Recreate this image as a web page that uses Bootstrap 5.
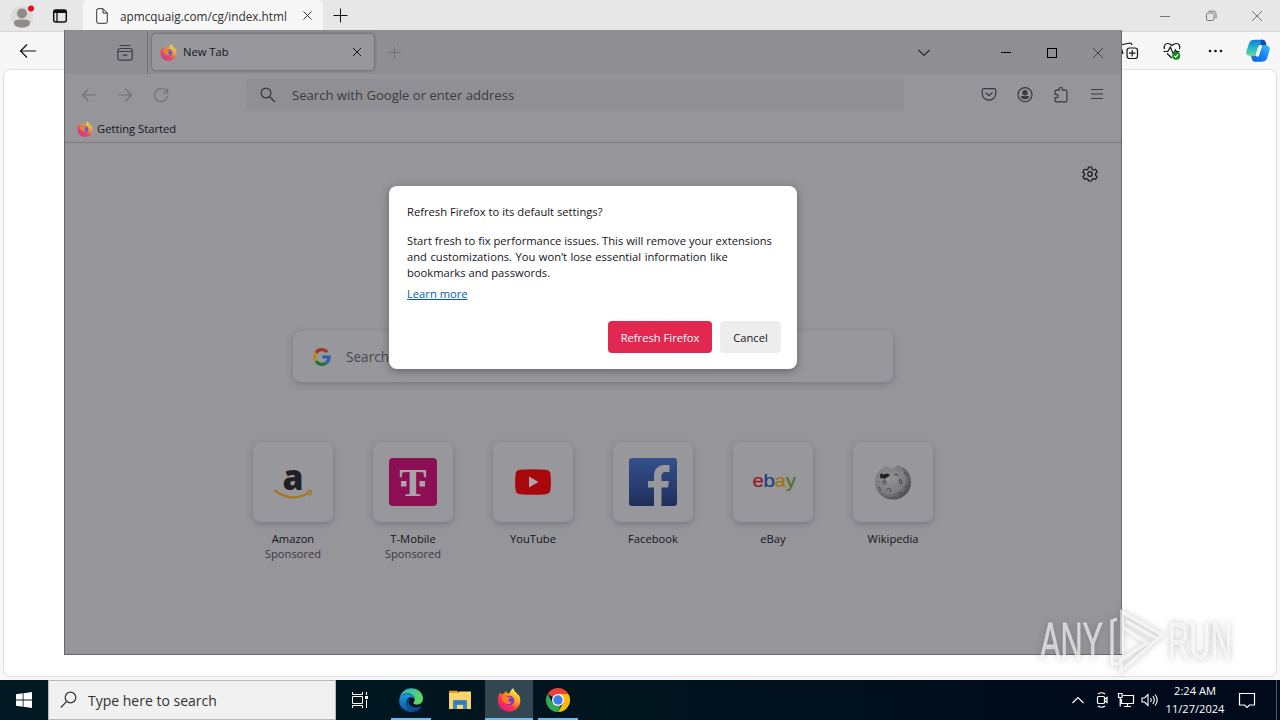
<!DOCTYPE html>
<html lang="en">
<head>
    <meta charset="UTF-8">
    <meta name="viewport" content="width=device-width, initial-scale=1.0">
    <title>Refresh Firefox</title>
    <link href="https://cdn.jsdelivr.net/npm/bootstrap@5.3.0/dist/css/bootstrap.min.css" rel="stylesheet">
    <style>
        body {
            width: 1280px;
            height: 720px;
            font-family: "Open Sans", "Noto Sans", sans-serif;
            font-size: 11.2px;
            line-height: 16px;
            color: #15141a;
        }
        svg { display: block; flex-shrink: 0; }
        .line-icon { fill: none; stroke: currentColor; stroke-width: 1.2; }

        /* Edge */
        .edge { height: 680px; background: #f7f7f8; color: #111; }
        .edge-tabs { height: 32px; background: #e7e7e7; border-bottom: 1px solid #d6d6d6; padding-left: 10px; }
        .edge-tab { width: 240px; height: 31px; background: #f7f7f7; border-radius: 5px 5px 0 0; margin-left: 15px; padding: 0 10px 0 13px; font-size: 11.8px; color: #303030; }
        .edge-tab span { margin-left: 12px; width: 183px; }
        .edge-win { color: #777; width: 46px; }
        .edge-tools { height: 37px; padding-right: 1px; }
        .edge-cell { width: 43px; }
        .edge-page { margin: 0 3px 3px 3px; border: 1px solid #dfdfe1; border-radius: 8px; }

        /* Firefox window */
        .fx { left: 64px; top: 30px; width: 1058px; height: 625px; background: #96959a; border: 1px solid #69686d; border-top-color: #8b8a8f; }
        .fx-tabs { height: 43px; background: #8f8e93; color: #28272d; }
        .fx-library { margin: 0 10px 0 48px; color: #3f3e44; }
        .fx-divider { width: 1px; height: 43px; background: #6f6e73; }
        .fx-tab { width: 222px; height: 36px; margin: 0 0 1px 4px; padding: 0 11px 0 8px; background: #98979c; border-radius: 4px; box-shadow: 0 0 3px rgba(0, 0, 0, .45); color: #15141a; }
        .fx-tab span { margin-left: 6px; }
        .fx-plus { margin-left: 14px; }
        .fx-chevron { margin-left: 516px; }
        .fx-win { width: 46px; }
        .fx-nav { height: 42px; padding: 0 6px; color: #3b3a40; }
        .fx-cell { width: 36px; }
        .fx-dim { color: #727176; }
        .fx-url { width: 658px; height: 32px; margin-left: 67px; padding-left: 14px; background: #909094; border-radius: 4px; font-size: 13.1px; color: #3b3a40; }
        .fx-url span { margin-left: 16px; }
        .fx-marks { height: 27px; padding: 0 0 1px 12px; border-bottom: 1px solid #7b7a7f; }
        .fx-search { width: 600px; height: 51px; background: #98979c; border-radius: 8px; box-shadow: 0 2px 6px rgba(58, 57, 68, .3); font-size: 13.6px; color: #48474d; padding-left: 20px; }
        .fx-search span { margin-left: 15px; }
        .fx-gear { height: 188px; padding: 23px 23px 0 0; }
        .fx-tiles { gap: 40px; margin-top: 60px; }
        .fx-tile { width: 80px; line-height: 15px; }
        .fx-tile-box { height: 80px; background: #98979c; border-radius: 8px; box-shadow: 0 2px 6px rgba(58, 57, 68, .3); margin-bottom: 9px; }
        .fx-sponsored { color: #3c3b40; }

        /* Refresh dialog */
        .fx-dialog { left: 324px; top: 155px; width: 408px; height: 183px; padding: 18px 16px 16px 18px; background: #fff; border-radius: 8px; box-shadow: 0 2px 8px rgba(0, 0, 0, .35); }
        .fx-dialog p { margin: 13px 0 5px; }
        .fx-line { word-spacing: .6px; }
        .fx-dialog a { color: #0060b9; }
        .fx-btn { --bs-btn-font-size: 11.2px; --bs-btn-border-radius: 4px; --bs-btn-padding-x: 0; --bs-btn-padding-y: 0; height: 32px; padding-top: 2px; border: 0; }
        .fx-btn-danger { width: 104px; background: #e22850; color: #fff; }
        .fx-btn-plain { width: 61px; background: #ededee; color: #15141a; }

        .watermark { left: 1020px; top: 590px; filter: drop-shadow(0 0 3px rgba(70, 70, 70, .5)); }

        /* Taskbar */
        .taskbar { height: 40px; background: linear-gradient(90deg, #001922, #00141e 50%, #000a1b 85%); color: #fff; }
        .tb-cell { width: 48px; height: 40px; }
        .tb-search { width: 288px; height: 40px; background: #f1f1f1; border: 1px solid #b9b9b9; font-size: 14px; color: #303030; padding-left: 11px; }
        .tb-search span { margin: 2px 0 0 11px; }
        .tb-apps { gap: 1px; margin-left: 3px; }
        .tb-open { border-bottom: 2px solid #76b9ed; width: 40px; margin: 0 4px; padding-top: 2px; }
        .tb-active { border-bottom: 2px solid #76b9ed; padding-top: 2px; background: #334751; }
        .tb-tray { width: 24px; }
        .tb-clock { width: 66px; line-height: 18px; font-size: 11.1px; }
        .tb-notify { width: 38px; margin-right: 10px; }
        .tb-peek { width: 4px; border-left: 1px solid #4c5667; }
    </style>
    <script src="https://cdn.jsdelivr.net/npm/bootstrap@5.3.0/dist/js/bootstrap.bundle.min.js"></script>
</head>
<body class="position-relative overflow-hidden">

    <svg width="0" height="0" class="position-absolute">
        <defs>
            <linearGradient id="fxBody" x1=".85" y1=".1" x2=".2" y2=".95">
                <stop offset="0" stop-color="#fff44f"/>
                <stop offset=".35" stop-color="#ff980e"/>
                <stop offset=".65" stop-color="#ff3647"/>
                <stop offset="1" stop-color="#e31587"/>
            </linearGradient>
            <linearGradient id="fxTail" x1=".6" y1="0" x2=".3" y2="1">
                <stop offset="0" stop-color="#fff04a"/>
                <stop offset=".5" stop-color="#ffb52a"/>
                <stop offset="1" stop-color="#ff5a35"/>
            </linearGradient>
            <linearGradient id="edgeA" x1="0" y1="0" x2="1" y2=".4">
                <stop offset="0" stop-color="#2aa7e8"/>
                <stop offset="1" stop-color="#5fd85a"/>
            </linearGradient>
            <linearGradient id="edgeB" x1="0" y1="0" x2="0" y2="1">
                <stop offset="0" stop-color="#1b9de2"/>
                <stop offset="1" stop-color="#0c50a0"/>
            </linearGradient>
            <linearGradient id="copA" x1="0" y1="0" x2="0" y2="1">
                <stop offset="0" stop-color="#147bd8"/>
                <stop offset=".55" stop-color="#23bdcc"/>
                <stop offset="1" stop-color="#74d68a"/>
            </linearGradient>
            <linearGradient id="copB" x1="1" y1="0" x2="0" y2="1">
                <stop offset="0" stop-color="#36c2f5"/>
                <stop offset=".5" stop-color="#1684f0"/>
                <stop offset="1" stop-color="#1262d6"/>
            </linearGradient>
            <linearGradient id="fbBlue" x1="0" y1="0" x2="0" y2="1">
                <stop offset="0" stop-color="#34508c"/>
                <stop offset="1" stop-color="#202f5c"/>
            </linearGradient>
            <radialGradient id="globe" cx=".4" cy=".4" r=".65">
                <stop offset="0" stop-color="#969696"/>
                <stop offset=".65" stop-color="#7d7d7f"/>
                <stop offset="1" stop-color="#46464a"/>
            </radialGradient>
            <symbol id="firefox" viewBox="0 0 24 24">
                <path d="M3.200 4.200c.2 1 .6 1.600 1.200 2.100C5.100 5.800 6 5.500 7 5.500 7.400 4.300 8.300 3.300 9.300 2.900 9.200 3.900 9.500 4.800 10.200 5.300L13 5.100C13.600 3.200 14.800 1.300 16.300.3c.2 2 1.300 3 2.700 4.400.9.900 1.600 1.900 2 2.900L21.400 6.500C23.300 9.700 23.700 12.700 22.900 15.600 21.500 20.500 17.300 23.700 12.200 23.700 5.900 23.700.9 18.800.8 12.600.8 9.500 1.500 6.600 3.200 4.200z" fill="url(#fxBody)"/>
                <circle cx="12.300" cy="12.600" r="4.900" fill="#7b3bd0"/>
                <path d="M4.500 9c2-1.600 4.600-1.400 6.200-.3 1.300.1 2.700.2 3 .8-.2 1-1.700 1.300-2.700 2 .3 1.700 1.800 2.700 3.700 2.500-.8 2-4.400 3.300-6.900.8C5.700 13.300 4.500 11.500 4.500 9z" fill="#ff7a24"/>
                <path d="M16.300.3C13.500 2 12.500 4.800 13 6.300c3 1 4.500 3.200 4.600 5.500.3 3.200-1.500 5.800-4.500 6.600 4 .6 8.700-1.400 9.700-5.600.2-2.300-.3-4.400-1.400-6.300L21 7.600C20 4.600 16.800 3.600 16.300.3z" fill="url(#fxTail)"/>
            </symbol>
        </defs>
    </svg>

    <!-- Edge browser in the background -->
    <div class="edge d-flex flex-column">
        <div class="edge-tabs d-flex align-items-center">
            <svg width="26" height="28" viewBox="0 0 26 28">
                <circle cx="12" cy="15" r="11" fill="#dcdad8"/>
                <circle cx="12" cy="11.500" r="5" fill="#8f8c89"/>
                <path d="M4 21c0-3 3-3.500 8-3.500s8 .5 8 3.500-4 4.500-8 4.500-8-1.500-8-4.500z" fill="#8f8c89"/>
                <circle cx="21" cy="6.500" r="3" fill="#e3101c"/>
            </svg>
            <svg class="line-icon ms-3" width="16" height="16" viewBox="0 0 16 16">
                <rect x="1.700" y="2" width="12.600" height="12" rx="2" stroke-width="1.500"/>
                <path d="M2 3.500h12" stroke-width="3"/>
                <path d="M5 4v10" stroke-width="1.300"/>
            </svg>
            <div class="edge-tab d-flex align-items-center">
                <svg class="line-icon" width="12" height="16" viewBox="0 0 12 16"><path d="M.7 2.200Q.7.700 2.200.700H7l4.300 4.300v8.800q0 1.500-1.500 1.500H2.200Q.7 15.300.7 13.800zM7 .7V5h4.300" stroke-width="1"/></svg>
                <span class="text-nowrap flex-shrink-0">apmcquaig.com/cg/index.html</span>
                <svg class="line-icon" width="9" height="9" viewBox="0 0 9 9"><path d="M.5.5l8 8M8.500.5l-8 8" stroke-width="1"/></svg>
            </div>
            <svg class="line-icon ms-2" width="18" height="16" viewBox="0 0 18 16"><path d="M2.500 7.500h14M9.500.5v14" stroke-width="1"/></svg>
            <div class="d-flex ms-auto">
                <div class="edge-win d-flex justify-content-center"><svg class="line-icon" width="12" height="12" viewBox="0 0 12 12"><path d="M1 6.500h10" stroke-width="1"/></svg></div>
                <div class="edge-win d-flex justify-content-center"><svg class="line-icon" width="12" height="12" viewBox="0 0 12 12"><rect x="1.500" y="3" width="7.500" height="7.500" rx="1.500" stroke-width="1"/><path d="M3.500 1.200H8.500Q11 1.200 11 3.700V8.500" stroke-width="1"/></svg></div>
                <div class="edge-win d-flex justify-content-center"><svg class="line-icon" width="12" height="12" viewBox="0 0 12 12"><path d="M1 1l10 10M11 1L1 11" stroke-width="1"/></svg></div>
            </div>
        </div>
        <div class="edge-tools d-flex align-items-center">
            <svg class="line-icon ms-3" width="24" height="16" viewBox="0 0 24 16"><path d="M20 8H4.500M11 1.500L4.500 8l6.500 6.500"/></svg>
            <div class="d-flex align-items-center ms-auto">
                <div class="edge-cell d-flex justify-content-center">
                    <svg class="line-icon" width="20" height="20" viewBox="0 0 20 20"><path d="M4 13L2 6q-.5-2 1.500-2.500L11 2q1.500 0 2 2"/><rect x="8" y="7" width="10.500" height="10.500" rx="2.500"/><path d="M10 12.200h6.500M13.200 9v6.500"/></svg>
                </div>
                <div class="edge-cell d-flex justify-content-center">
                    <svg class="line-icon" width="20" height="20" viewBox="0 0 20 20"><path d="M2.500 8C1.500 4 3.500 2.500 5.500 2.500 8 2.500 9 3.500 10 4.500c1-1 2-2 4.500-2C17 2.500 18.500 5 17.500 8M1.500 10.500h4.300L8.300 6l3 7L13.500 9l1 1.500h3M5 12.500l5 4.500"/><circle cx="14.200" cy="14.700" r="4" fill="#13871a" stroke="none"/><path d="M12.300 14.800l1.400 1.300 2.500-2.700" stroke="#fff"/></svg>
                </div>
                <div class="edge-cell d-flex justify-content-center">
                    <svg width="16" height="6" viewBox="0 0 16 6" fill="currentColor"><circle cx="3" cy="3" r="1.300"/><circle cx="8.500" cy="3" r="1.300"/><circle cx="14" cy="3" r="1.300"/></svg>
                </div>
                <div class="edge-cell d-flex justify-content-center">
                    <svg width="24" height="24" viewBox="0 0 24 24">
                        <path d="M9 .8h7.500c1.600 0 2.300 1.200 2.800 2.500l1.100 3.200H14.500c-1.600 0-2.300 1-2.700 2.300L9.500 16.700H3.500C.7 16.700-.3 14.500.4 12L3 4.500C4 1.800 5.800.8 9 .8z" fill="url(#copA)"/>
                        <path d="M14.800.8h2c1.600 0 2.300 1.200 2.800 2.500l1 3.200H14.500z" fill="#164bb2"/>
                        <path d="M15.500 6.500h4.800c2.900 0 4 2 3.300 4.800L21.200 19c-.9 2.600-2.600 3.700-5.500 3.700H9c-1.600 0-2.500-.8-3-2.500l-1-3.500h4.200c1.600 0 2.600-.9 3-2.200z" fill="url(#copB)"/>
                        <path d="M14.500 7.500l-3 8.700" stroke="#fff" stroke-width="3" stroke-linecap="round"/>
                    </svg>
                </div>
            </div>
        </div>
        <div class="edge-page flex-fill bg-white"></div>
    </div>

    <!-- Firefox window, dimmed behind its dialog -->
    <div class="fx position-absolute">
        <div class="fx-tabs d-flex align-items-center">
            <svg class="line-icon fx-library" width="24" height="20" viewBox="0 0 24 20"><path d="M6.500 2.500h11M4.800 8q0-2.500 2.500-2.500h9.400q2.500 0 2.500 2.500v6.700q0 2.500-2.500 2.500H7.300q-2.500 0-2.500-2.500zM4.800 8.500h14.400M9.800 12.200h4.500" stroke-width="1.200"/></svg>
            <div class="fx-divider"></div>
            <div class="fx-tab d-flex align-items-center">
                <svg width="17" height="17" opacity=".75"><use href="#firefox"/></svg>
                <span>New Tab</span>
                <svg class="line-icon ms-auto" width="12" height="12" viewBox="0 0 12 12"><path d="M2 2l8 8M10 2l-8 8" stroke-width="1"/></svg>
            </div>
            <svg class="line-icon fx-dim fx-plus" width="13" height="13" viewBox="0 0 13 13"><path d="M.5 6.500h12M6.500.5v12" stroke-width="1"/></svg>
            <svg class="line-icon fx-chevron" width="14" height="12" viewBox="0 0 14 12"><path d="M1.500 3L7 8.500 12.500 3" stroke-width="1.100"/></svg>
            <div class="d-flex text-black ms-auto">
                <div class="fx-win d-flex justify-content-center"><svg class="line-icon" width="12" height="12" viewBox="0 0 12 12"><path d="M1 5.500h10" stroke-width="1"/></svg></div>
                <div class="fx-win d-flex justify-content-center"><svg class="line-icon" width="12" height="12" viewBox="0 0 12 12"><rect x="1.500" y="1.500" width="9" height="9" stroke-width="1"/></svg></div>
                <div class="fx-win d-flex justify-content-center"><svg class="line-icon" width="12" height="12" viewBox="0 0 12 12"><path d="M1 1l10 10M11 1L1 11" stroke="#403f44" stroke-width="1"/></svg></div>
            </div>
        </div>

        <div class="fx-nav d-flex align-items-center">
            <div class="fx-cell fx-dim d-flex justify-content-center"><svg class="line-icon" width="16" height="16" viewBox="0 0 16 16"><path d="M15 8H1.500M7.500 2l-6 6 6 6"/></svg></div>
            <div class="fx-cell fx-dim d-flex justify-content-center"><svg class="line-icon" width="16" height="16" viewBox="0 0 16 16"><path d="M1 8h13.500M8.500 2l6 6-6 6"/></svg></div>
            <div class="fx-cell fx-dim d-flex justify-content-center"><svg class="line-icon" width="16" height="16" viewBox="0 0 16 16"><path d="M13.800 4.800A6.600 6.600 0 1 0 14.600 9M14.500 1.500v4.500H10"/></svg></div>
            <div class="fx-url d-flex align-items-center">
                <svg class="line-icon" width="16" height="16" viewBox="0 0 16 16"><circle cx="6" cy="6" r="4.800" stroke-width="1.400"/><path d="M9.500 9.500L15 15" stroke-width="1.500"/></svg>
                <span>Search with Google or enter address</span>
            </div>
            <div class="d-flex ms-auto">
                <div class="fx-cell d-flex justify-content-center"><svg class="line-icon" width="16" height="16" viewBox="0 0 16 16"><path d="M3 1.700h10q1.800 0 1.800 1.800V6.800a6.800 6.300 0 0 1-13.600 0V3.500Q1.200 1.700 3 1.700zM4.500 5.500L8 8.800 11.500 5.500"/></svg></div>
                <div class="fx-cell d-flex justify-content-center"><svg class="line-icon" width="16" height="16" viewBox="0 0 16 16"><circle cx="8" cy="7.700" r="7"/><circle cx="8" cy="5.700" r="2.700" fill="currentColor" stroke="none"/><path d="M3.800 9h8.400c0 2-1.700 3.300-4.200 3.300S3.800 11 3.800 9z" fill="currentColor" stroke="none"/></svg></div>
                <div class="fx-cell d-flex justify-content-center"><svg class="line-icon" width="16" height="16" viewBox="0 0 16 16"><path d="M2 4.500q0-1.300 1.300-1.300H6.200V2.200q0-1.700 1.600-1.700t1.600 1.700v1h3.300Q14 3.200 14 4.500v9q0 1.300-1.300 1.300H3.300Q2 14.800 2 13.500v-2.800h1.200q1.900 0 1.900-1.700T3.200 7.300H2z"/></svg></div>
                <div class="fx-cell d-flex justify-content-center"><svg class="line-icon" width="16" height="16" viewBox="0 0 16 16"><path d="M2 2.500h12M2 7h12M2 11.500h12"/></svg></div>
            </div>
        </div>

        <div class="fx-marks d-flex align-items-center">
            <svg width="16" height="16" opacity=".75"><use href="#firefox"/></svg>
            <span class="ms-1">Getting Started</span>
        </div>

        <div class="fx-gear d-flex justify-content-end">
            <svg class="line-icon" width="16" height="16" viewBox="0 0 16 16"><circle cx="8" cy="8" r="2.300"/><path d="M6.500 1h3l.5 2.200 1.500.8 2.100-.7 1.600 2.700-1.600 1.500v1.800l1.500 1.300-1.500 2.700-2.100-.7-1.500.9L9.500 15h-3L6 13.500l-1.500-.9-2.100.7L.9 10.600l1.500-1.300V7.500L.8 6l1.600-2.700 2.100.7L6 3.200z" stroke-linejoin="round"/></svg>
        </div>

        <div class="d-flex flex-column align-items-center">
            <div class="fx-search d-flex align-items-center">
                <svg width="18" height="18" viewBox="0 0 18 18" fill="none" stroke-width="3.200">
                    <path d="M3 4.800A7.200 7.200 0 0 1 14.300 4" stroke="#a83428"/>
                    <path d="M3 4.800A7.400 7.400 0 0 0 3 13.200" stroke="#b68a10"/>
                    <path d="M3 13.200A7.200 7.200 0 0 0 13.600 14.700" stroke="#24713a"/>
                    <path d="M13.600 14.700Q16.200 12.500 16.200 9H9.300" stroke="#2f5fb0"/>
                </svg>
                <span>Search the web</span>
            </div>

            <div class="fx-tiles d-flex text-center">
                <div class="fx-tile">
                    <div class="fx-tile-box d-flex justify-content-center align-items-center">
                        <svg class="overflow-visible" width="48" height="48" viewBox="0 0 48 48">
                            <text x="24" y="32" text-anchor="middle" font-size="36" font-weight="800" fill="#211f25" textLength="21" lengthAdjust="spacingAndGlyphs">a</text>
                            <path d="M5.500 32.500Q23 45 40 34.800" fill="none" stroke="#a87521" stroke-width="2.200"/>
                            <path d="M37.500 33.500q5-2 5 0 0 2.500-2 5" fill="none" stroke="#a87521" stroke-width="1.400"/>
                        </svg>
                    </div>
                    <div>Amazon</div>
                    <div class="fx-sponsored">Sponsored</div>
                </div>
                <div class="fx-tile">
                    <div class="fx-tile-box d-flex justify-content-center align-items-center">
                        <svg width="48" height="48" viewBox="0 0 48 48">
                            <rect width="48" height="48" rx="4" fill="#8c0f53"/>
                            <text x="24" y="37.500" text-anchor="middle" font-family="Liberation Serif, serif" font-size="41" font-weight="700" fill="#a9a4ab">T</text>
                            <path d="M12 23h5.500v5.500H12zM30.500 23H36v5.500h-5.500z" fill="#a9a4ab"/>
                        </svg>
                    </div>
                    <div>T-Mobile</div>
                    <div class="fx-sponsored">Sponsored</div>
                </div>
                <div class="fx-tile">
                    <div class="fx-tile-box d-flex justify-content-center align-items-center">
                        <svg width="36" height="26" viewBox="0 0 36 26"><path d="M5 .8Q18-.4 31 .8 35 1.200 35.400 5 36.400 13 35.400 21 35 24.800 31 25.200 18 26.400 5 25.200 1 24.800.6 21-.4 13 .6 5 1 1.200 5 .8z" fill="#a8080c"/><path d="M14 7.500l9.500 5.500-9.500 5.500z" fill="#aaa6ab"/></svg>
                    </div>
                    <div>YouTube</div>
                </div>
                <div class="fx-tile">
                    <div class="fx-tile-box d-flex justify-content-center align-items-center">
                        <svg width="48" height="48" viewBox="0 0 48 48">
                            <rect width="48" height="48" rx="3" fill="url(#fbBlue)"/>
                            <path d="M25 48V29.500h-6V23h6v-5c0-7 4-11 10.500-11H40.500v7H37c-3.500 0-4.500 1.700-4.500 4.500V23h7.500l-1 6.500h-6.500V48z" fill="#98979c"/>
                        </svg>
                    </div>
                    <div>Facebook</div>
                </div>
                <div class="fx-tile">
                    <div class="fx-tile-box d-flex justify-content-center align-items-center">
                        <svg class="overflow-visible" width="48" height="48" viewBox="0 0 48 48">
                            <text x="3.500" y="29.500" font-family="Liberation Sans, sans-serif" font-size="19" letter-spacing="-.3" transform="translate(-.4 0) scale(1.080 1)" stroke-width=".2"><tspan fill="#921c2c" stroke="#921c2c">e</tspan><tspan fill="#183f83" stroke="#183f83">b</tspan><tspan fill="#a17513" stroke="#a17513">a</tspan><tspan fill="#4a7420" stroke="#4a7420">y</tspan></text>
                        </svg>
                    </div>
                    <div>eBay</div>
                </div>
                <div class="fx-tile">
                    <div class="fx-tile-box d-flex justify-content-center align-items-center">
                        <svg width="48" height="48" viewBox="0 0 48 48">
                            <path d="M12 11l6-3 4 3 7-3.500 7 3Q42 16 42 24.500A18 17 0 0 1 6 24.500Q6 16 12 11z" fill="url(#globe)"/>
                            <path d="M11 16.500q2-2 3 0l4-1 3 1-2 2.500-2 .5-1 2-2-1.500-2.500.5z" fill="#1f1f22"/>
                            <g fill="none" stroke="#3a3a3d" stroke-width=".8">
                                <path d="M14 23h3l-.5 3h-2zM30 22l1 4 2-.5-1-4zM17 32l3-2 2 2-1 2M25 17l3-1 1 2M9 29l2 1v3M35 14l3 4M36 30l3-3 1 1M28 36l3-2 2 1"/>
                                <path d="M22 9q-3 8 1 14t6 17M6.500 22q10 8 35 4" stroke="#747476" stroke-width=".5"/>
                            </g>
                        </svg>
                    </div>
                    <div>Wikipedia</div>
                </div>
            </div>
        </div>

        <div class="fx-dialog position-absolute d-flex flex-column text-nowrap">
            <div>Refresh Firefox to its default settings?</div>
            <p>Start fresh to fix performance issues. This will remove your extensions<br><span class="fx-line">and customizations. You won’t lose essential information like</span><br>bookmarks and passwords.</p>
            <div><a href="#">Learn more</a></div>
            <div class="d-flex justify-content-end gap-2 mt-auto">
                <button type="button" class="btn fx-btn fx-btn-danger">Refresh Firefox</button>
                <button type="button" class="btn fx-btn fx-btn-plain">Cancel</button>
            </div>
        </div>
    </div>

    <svg class="watermark position-absolute" width="245" height="90" viewBox="-10 -10 245 90">
        <g fill="#fff" fill-opacity=".62" stroke="#fff" stroke-opacity=".5" stroke-width=".8" font-family="Liberation Sans Narrow, Liberation Sans, sans-serif" font-size="52">
            <text x="10" y="59" textLength="63" lengthAdjust="spacingAndGlyphs">ANY</text>
            <text x="138" y="59" textLength="64" lengthAdjust="spacingAndGlyphs">RUN</text>
        </g>
        <g fill="none" stroke="#fff" stroke-opacity=".65" stroke-width="3.500">
            <path d="M87 19l-5 2v43h7"/>
            <path d="M92 54V12l40 23-41 36V60l26-17-25-16"/>
            <path d="M96 21l30 17"/>
        </g>
    </svg>

    <!-- Windows taskbar -->
    <div class="taskbar d-flex">
        <div class="tb-cell d-flex justify-content-center align-items-center">
            <svg width="16" height="16" viewBox="0 0 16 16" fill="#fff"><path d="M0 2.300L6.700 1.300v6.300H0zM7.500 1.200L16 0v7.600H7.500zM0 8.400h6.700v6.300L0 13.700zM7.500 8.400H16V16l-8.500-1.200z"/></svg>
        </div>
        <div class="tb-search d-flex align-items-center">
            <svg class="line-icon" width="17" height="18" viewBox="0 0 17 18"><circle cx="10.500" cy="6.500" r="5.300"/><path d="M6.800 10.300L.8 16.500"/></svg>
            <span>Type here to search</span>
        </div>
        <div class="tb-cell d-flex justify-content-center align-items-center">
            <svg class="line-icon" width="18" height="16" viewBox="0 0 18 16"><path d="M1.500 0v2.500h10V0M1.500 4.500h10v7h-10zM1.500 16v-2.500h10V16M15.500 0v3M15.500 8v8" stroke-width="1"/><path d="M14 4h3v3h-3z" fill="#fff" stroke="none"/></svg>
        </div>
        <div class="tb-apps d-flex">
            <div class="tb-cell tb-open d-flex justify-content-center align-items-center">
                <svg width="24" height="24" viewBox="0 0 24 24">
                    <path d="M.5 11C1.500 4.500 6.300.2 12.200.2 19 .2 24 5 24 10.500c0 4-3 6-6 6-2.600 0-3.800-.9-3.600-1.800.2-.7 1.300-1.300 1.300-3.200C15.700 8 12 5.500 8 5.500 4.500 5.500 1.500 8 .5 11z" fill="url(#edgeA)"/>
                    <path d="M.2 12.500C.7 8.500 4.200 6 8.300 6c4.300 0 7.400 2.800 7.400 5.500-.2-1-1.500-2.300-3.500-2.300-3 0-5 2.600-5 5.500 0 4.500 4 7.800 8.300 7.800 2.500 0 4.500-.7 6.500-2.100C20.300 22.500 16.500 24 12.300 24 5 24-.3 18.500.2 12.500z" fill="url(#edgeB)"/>
                    <path d="M10.400 10.500c-2 1.200-3.200 3.500-2.800 6 .6 3.900 4.400 6.300 8.400 6 2.500-.3 4.300-1.300 6-3 .8-.9.200-1.300-.7-.8-5 2-10.700-.3-11.500-4.500-.2-1.400 0-2.600.6-3.700z" fill="#124f92"/>
                </svg>
            </div>
            <div class="tb-cell d-flex justify-content-center align-items-center">
                <svg width="22" height="20" viewBox="0 0 22 20">
                    <path d="M0 1.500Q0 .8.800.8H8l2 2.200H0z" fill="#e49c1c"/>
                    <path d="M0 3h9l1-1.500h12V19H0z" fill="#fbd46c"/>
                    <path d="M4 19v-8q0-1 1-1h12q1 0 1 1v8h-4v-4H8v4z" fill="#3b89c4"/>
                    <path d="M6 12.500h10" stroke="#276da6" stroke-width="1.500"/>
                </svg>
            </div>
            <div class="tb-cell tb-active d-flex justify-content-center align-items-center">
                <svg width="24" height="24"><use href="#firefox"/></svg>
            </div>
            <div class="tb-cell tb-open d-flex justify-content-center align-items-center">
                <svg width="24" height="24" viewBox="0 0 24 24">
                    <path d="M12 12L1.600 6A12 12 0 0 1 22.400 6z" fill="#ea4335"/>
                    <path d="M12 6h10.400A12 12 0 0 1 12 24l5.200-9z" fill="#fbbc05"/>
                    <path d="M1.600 6l5.200 9 5.200 3 2.600-.5L12 24A12 12 0 0 1 1.600 6z" fill="#34a853"/>
                    <circle cx="12" cy="12" r="6" fill="#fff"/>
                    <circle cx="12" cy="12" r="4.700" fill="#3b7ded"/>
                </svg>
            </div>
        </div>
        <div class="d-flex align-items-center ms-auto">
            <div class="tb-tray d-flex justify-content-center"><svg class="line-icon" width="14" height="10" viewBox="0 0 14 10"><path d="M1.500 8L7 2.500 12.500 8"/></svg></div>
            <div class="tb-tray d-flex justify-content-center"><svg class="line-icon" width="14" height="18" viewBox="0 0 14 18"><rect x="2.500" y="5.500" width="7" height="7" rx="1"/><path d="M9.500 8.500l2.500-2v5L9.500 9.500M3 3Q6.500.5 10 3M3 15Q6.500 17.500 10 15"/></svg></div>
            <div class="tb-tray d-flex justify-content-center"><svg class="line-icon" width="18" height="16" viewBox="0 0 18 16"><path d="M6 3.500h10.500v8H4.500V7M7 14.500h7M10.500 11.500v3M1.500 1.500H5v4H1.500zM3.200 5.500v9"/></svg></div>
            <div class="tb-tray d-flex justify-content-center"><svg class="line-icon" width="18" height="14" viewBox="0 0 18 14"><path d="M1 5h2.500L7 1.500v11L3.500 9H1zM9.500 5q1.500 2 0 4M11.800 3q3 4 0 8M14 1.500q4.500 5.500 0 11" stroke-width="1.100"/></svg></div>
            <div class="tb-clock text-center">2:24 AM<br>11/27/2024</div>
        </div>
        <div class="tb-notify d-flex justify-content-center align-items-center"><svg class="line-icon" width="18" height="18" viewBox="0 0 18 18"><path d="M1.500 2.500h15v11.500h-5L9 16.500 6.500 14h-5z"/></svg></div>
        <div class="tb-peek"></div>
    </div>
</body>
</html>
